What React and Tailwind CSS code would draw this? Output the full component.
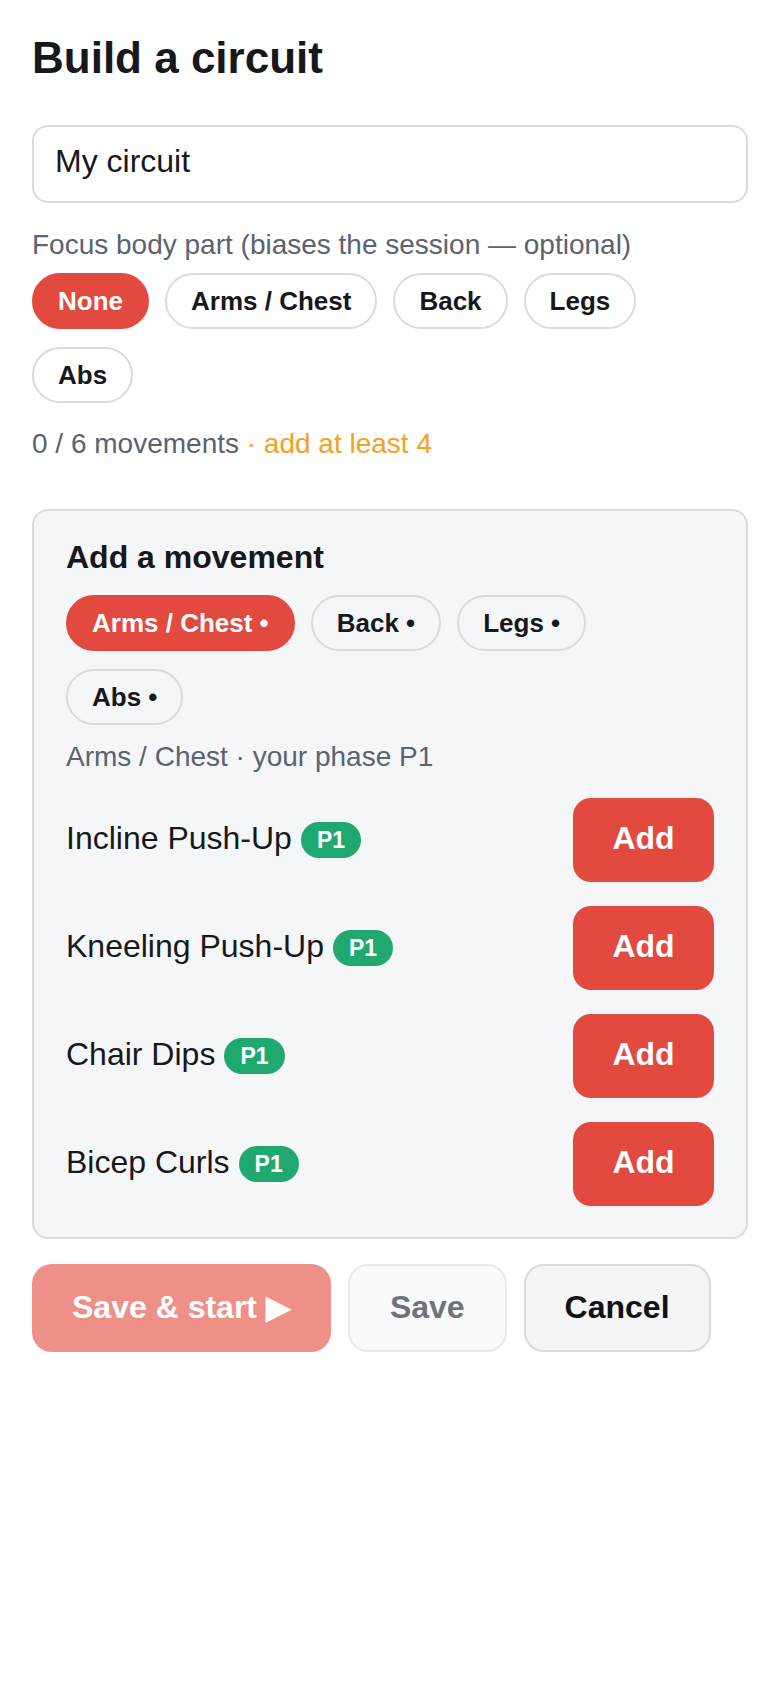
import React from "react";

const font = { fontFamily: '"Liberation Sans", Arial, sans-serif' };

function Chip({ label, active, inCard }) {
  const base =
    "h-[56px] flex items-center rounded-full border-2 text-[26px] font-bold leading-none px-[24px]";
  const look = active
    ? " bg-[#e2493f] border-[#e2493f] text-white"
    : inCard
    ? " bg-transparent border-[#d8dbe0] text-[#17181c]"
    : " bg-white border-[#d8dbe0] text-[#17181c]";
  return <div className={base + look}>{label}</div>;
}

function Row({ name }) {
  return (
    <div className="flex items-center justify-between h-[84px]">
      <div className="flex items-center gap-[9px]">
        <span className="text-[32px] leading-[40px] pb-[5px] text-[#17181c]">{name}</span>
        <span className="h-[36px] flex items-center rounded-full bg-[#1fa870] px-[16px] text-[23px] font-bold text-white leading-none">
          P1
        </span>
      </div>
      <button className="w-[141px] h-[84px] rounded-[18px] bg-[#e2493f] pb-[5px] text-white text-[32px] font-bold">
        Add
      </button>
    </div>
  );
}

export default function App() {
  return (
    <div style={font} className="min-h-[1688px] w-full bg-white px-[32px] pt-[32px] text-[#17181c]">
      <h1 className="text-[44px] font-bold leading-[52px] text-[#16181d]">Build a circuit</h1>

      <input
        readOnly
        value="My circuit"
        style={font}
        className="mt-[41px] block w-full h-[78px] rounded-[16px] border-2 border-[#d8dbe0] bg-white px-[21px] pb-[6px] text-[32px] text-[#17181c] outline-none"
      />

      <div className="mt-[22px] text-[28px] leading-[40px] text-[#5b6270]">
        Focus body part (biases the session — optional)
      </div>

      <div className="mt-[8px] flex flex-wrap gap-x-[16px] gap-y-[18px]">
        <Chip label="None" active />
        <Chip label="Arms / Chest" />
        <Chip label="Back" />
        <Chip label="Legs" />
        <Chip label="Abs" />
      </div>

      <div className="mt-[21px] text-[28px] leading-[40px] text-[#5b6270]">
        0 / 6 movements <span className="text-[#f5a025]">· add at least 4</span>
      </div>

      <div className="mt-[45px] rounded-[16px] border-2 border-[#d9dce1] bg-[#f5f6f8] px-[32px] pt-[26px] pb-[31px]">
        <div className="text-[32px] font-bold leading-[40px] text-[#16181d]">Add a movement</div>

        <div className="mt-[18px] flex flex-wrap gap-x-[16px] gap-y-[18px]">
          <Chip label="Arms / Chest •" active inCard />
          <Chip label="Back •" inCard />
          <Chip label="Legs •" inCard />
          <Chip label="Abs •" inCard />
        </div>

        <div className="mt-[12px] text-[28px] leading-[40px] text-[#5b6270]">
          Arms / Chest · your phase P1
        </div>

        <div className="mt-[21px] flex flex-col gap-[24px]">
          <Row name="Incline Push-Up" />
          <Row name="Kneeling Push-Up" />
          <Row name="Chair Dips" />
          <Row name="Bicep Curls" />
        </div>
      </div>

      <div className="mt-[25px] flex gap-[17px]">
        <button className="h-[88px] rounded-[20px] border-2 border-transparent bg-[#ee8f88] px-[38px] pb-[2px] text-[32px] font-bold text-white">
          Save &amp; start ▶
        </button>
        <button className="h-[88px] rounded-[20px] border-2 border-[#e6e8eb] bg-[#f9fafb] px-[40px] pb-[2px] text-[32px] font-bold text-[#6f7378]">
          Save
        </button>
        <button className="h-[88px] rounded-[20px] border-2 border-[#d8dbe0] bg-[#f4f5f7] px-[39px] pb-[2px] text-[32px] font-bold text-[#121212]">
          Cancel
        </button>
      </div>
    </div>
  );
}
